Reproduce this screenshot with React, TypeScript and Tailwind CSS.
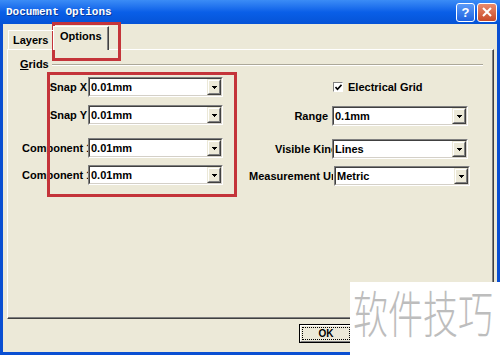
import React from "react";

function Arrow() {
  return (
    <svg width="5" height="3" viewBox="0 0 5 3" shapeRendering="crispEdges">
      <rect x="0" y="0" width="5" height="1" fill="#000" />
      <rect x="1" y="1" width="3" height="1" fill="#000" />
      <rect x="2" y="2" width="1" height="1" fill="#000" />
    </svg>
  );
}

function Combo({ value, className }: { value: string; className: string }) {
  return (
    <div
      className={`h-[20px] shrink-0 border border-t-[#808080] border-l-[#808080] border-b-white border-r-white ${className}`}
    >
      <div className="flex h-full border border-t-[#404040] border-l-[#404040] border-b-[#d4d0c8] border-r-[#d4d0c8] bg-white">
        <div className="flex flex-1 items-center pl-[1px] text-[11px] font-bold leading-none text-black">
          {value}
        </div>
        <div className="h-full w-[14px] border border-t-[#ece9d8] border-l-[#ece9d8] border-b-[#404040] border-r-[#404040]">
          <div className="flex h-full w-full items-center justify-center border border-t-white border-l-white border-b-[#808080] border-r-[#808080] bg-[#ece9d8]">
            <Arrow />
          </div>
        </div>
      </div>
    </div>
  );
}

function Label({ text, className }: { text: string; className: string }) {
  return (
    <div
      className={`h-[20px] shrink-0 overflow-hidden whitespace-nowrap text-[11px] font-bold leading-[20px] text-black ${className}`}
    >
      {text}
    </div>
  );
}

export default function App() {
  return (
    <div className="relative h-[355px] w-[500px] overflow-hidden bg-[#0a4fd2] font-['Liberation_Sans',Arial,sans-serif]">
      {/* Title bar */}
      <div className="flex h-[24px] items-center justify-between bg-gradient-to-b from-[#3b8cf6] via-[#0a5fe8] to-[#0553d6] pl-[6px] pr-[3px]">
        <div className="font-['Liberation_Mono',monospace] text-[11px] font-bold leading-none text-white [text-shadow:1px_1px_0_#0a3a9a]">
          Document Options
        </div>
        <div className="flex gap-[2px]">
          <div className="flex h-[19px] w-[19px] items-center justify-center rounded-[3px] border border-white bg-gradient-to-b from-[#5a9af8] to-[#1f62e0] text-[13px] font-bold leading-none text-white">
            ?
          </div>
          <div className="flex h-[19px] w-[20px] items-center justify-center rounded-[3px] border border-white bg-gradient-to-b from-[#e98a6c] to-[#c84a28]">
            <svg width="10" height="10" viewBox="0 0 10 10">
              <path d="M1 1L9 9M9 1L1 9" stroke="#fff" strokeWidth="2" />
            </svg>
          </div>
        </div>
      </div>

      {/* Body */}
      <div className="ml-[3px] flex h-[328px] w-[494px] flex-col bg-[#ece9d8]">
        {/* Tabs */}
        <div className="relative z-10 flex h-[25px] items-end pl-[5px]">
          <div className="flex h-[19px] w-[45px] items-center border-l border-t border-l-white border-t-white pl-[4px] text-[11px] font-bold text-black">
            Layers
          </div>
          <div className="-mb-[1px] h-[24px] w-[56px] border-l border-t border-r border-l-white border-t-white border-r-[#404040] bg-[#ece9d8]">
            <div className="flex h-full items-start border-r border-r-[#808080] pl-[6px] pt-[3px] text-[11px] font-bold leading-[13px] text-black">
              Options
            </div>
          </div>
        </div>

        {/* Panel */}
        <div className="ml-[4px] h-[270px] w-[487px] border-l border-t border-r border-b border-l-white border-t-white border-r-[#404040] border-b-[#404040]">
          <div className="flex h-full flex-col border-r border-b border-r-[#808080] border-b-[#808080]">
            {/* Grids group */}
            <div className="mt-[8px] flex h-[13px] items-center pl-[12px] pr-[9px]">
              <div className="text-[11px] font-bold leading-[13px] text-black">
                <span className="underline">G</span>rids
              </div>
              <div className="ml-[3px] h-[2px] flex-1 border-t border-b border-t-[#aca899] border-b-white" />
            </div>

            {/* Row 1 */}
            <div className="mt-[6px] flex items-start pl-[14px]">
              <Label text="Snap X" className="w-[66px] pr-[1px] text-right" />
              <Combo value="0.01mm" className="w-[135px]" />
              <div className="ml-[26px] flex h-[20px] items-center pl-[84px]">
                <div className="flex h-[10px] w-[10px] items-center justify-center border border-t-[#808080] border-l-[#808080] border-b-white border-r-white bg-white">
                  <svg width="7" height="7" viewBox="0 0 7 7">
                    <path d="M0.5 3L2.5 5.2L6.5 0.8" stroke="#000" strokeWidth="1.6" fill="none" />
                  </svg>
                </div>
                <div className="ml-[5px] text-[11px] font-bold leading-none text-black">
                  Electrical Grid
                </div>
              </div>
            </div>

            {/* Row 2 */}
            <div className="mt-[8px] flex items-start pl-[14px]">
              <Label text="Snap Y" className="w-[66px] pr-[1px] text-right" />
              <Combo value="0.01mm" className="w-[135px]" />
              <div className="ml-[26px] mt-[1px] flex">
                <Label text="Range" className="w-[83px] pr-[4px] text-right" />
                <Combo value="0.1mm" className="w-[136px]" />
              </div>
            </div>

            {/* Row 3 */}
            <div className="mt-[12px] flex items-start pl-[14px]">
              <Label text="Component 1" className="w-[66px] text-left" />
              <Combo value="0.01mm" className="w-[135px]" />
              <div className="ml-[26px] mt-[1px] flex">
                <Label text="Visible Kind" className="w-[83px] pl-[26px] text-left" />
                <Combo value="Lines" className="w-[136px]" />
              </div>
            </div>

            {/* Row 4 */}
            <div className="mt-[6px] flex items-start pl-[14px]">
              <Label text="Component 1" className="w-[66px] text-left" />
              <Combo value="0.01mm" className="w-[135px]" />
              <div className="ml-[26px] mt-[1px] flex">
                <Label text="Measurement Units" className="w-[84px] text-left" />
                <Combo value="Metric" className="ml-[1px] w-[136px]" />
              </div>
            </div>
          </div>
        </div>

        {/* Buttons */}
        <div className="mt-[5px] flex pl-[296px]">
          <div className="h-[19px] w-[54px] border border-black bg-[#ece9d8]">
            <div className="h-full w-full border border-t-white border-l-white border-b-[#808080] border-r-[#808080] p-[1px]">
              <div className="flex h-full w-full items-center justify-center border border-dotted border-black text-[10px] font-bold leading-none text-black">
                OK
              </div>
            </div>
          </div>
        </div>
      </div>

      {/* Red annotation rectangles */}
      <div className="absolute left-[52px] top-[22px] h-[39px] w-[69px] border-[3px] border-[#c4343a]" />
      <div className="absolute left-[47px] top-[72px] h-[125px] w-[190px] border-[3px] border-[#c4343a]" />

      {/* Watermark */}
      <div className="absolute left-[350px] top-[282px] h-[73px] w-[150px] bg-white pl-[3px] pt-[4px]">
        <div className="origin-left scale-x-[0.7] whitespace-nowrap font-['Noto_Sans_CJK_SC',sans-serif] text-[50px] font-light leading-none text-[#bdbdbd]">
          软件技巧
        </div>
      </div>
    </div>
  );
}
